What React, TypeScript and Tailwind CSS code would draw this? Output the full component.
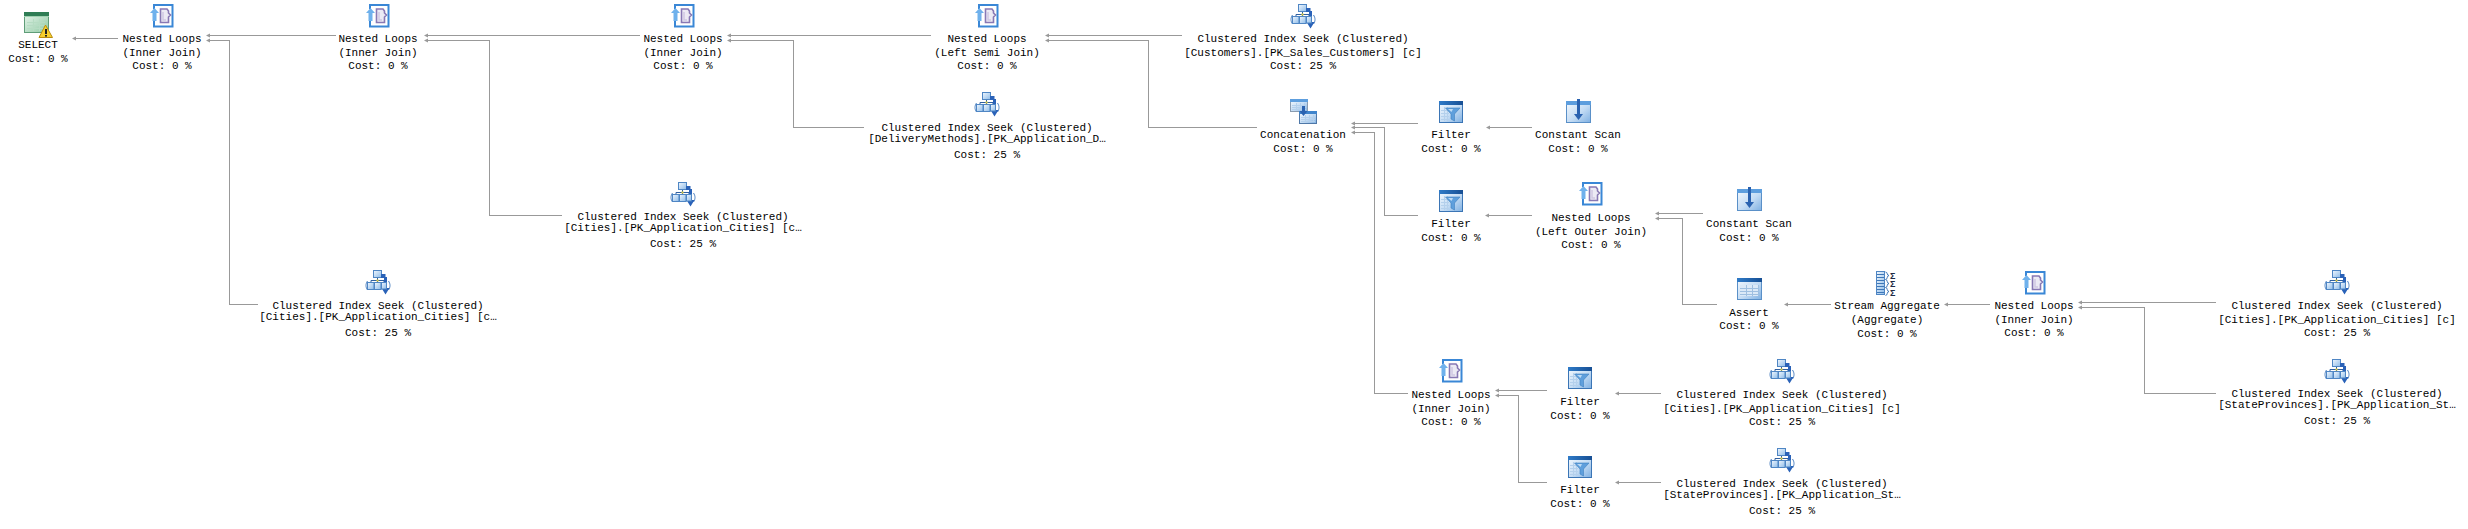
import React from "react";

type IconName = "select" | "loops" | "seek" | "filter" | "scan" | "assert" | "concat" | "agg";

type NodeData = { cx: number; top: number; icon: IconName; iconX?: number; lines: [string, number][] };

const Defs = () => (
  <svg width="0" height="0" className="absolute">
    <defs>
      <linearGradient id="winBody" x1="0" y1="0" x2="1" y2="1">
        <stop offset="0" stopColor="#f4f9fe" />
        <stop offset="0.55" stopColor="#c4dcf4" />
        <stop offset="1" stopColor="#7fb0e2" />
      </linearGradient>
      <linearGradient id="winHead" x1="0" y1="0" x2="1" y2="0">
        <stop offset="0" stopColor="#2f7bc8" />
        <stop offset="1" stopColor="#174f94" />
      </linearGradient>
      <linearGradient id="greenBody" x1="0" y1="0" x2="1" y2="1">
        <stop offset="0" stopColor="#e8f5ec" />
        <stop offset="1" stopColor="#8fcaa4" />
      </linearGradient>
      <linearGradient id="boxFill" x1="0" y1="0" x2="1" y2="1">
        <stop offset="0" stopColor="#f0f7fe" />
        <stop offset="1" stopColor="#8dbbe8" />
      </linearGradient>
    </defs>
  </svg>
);

const Grid = ({ x, y, w, h, stroke = "#a9c8e8", dx = 4, dy = 3 }: { x: number; y: number; w: number; h: number; stroke?: string; dx?: number; dy?: number }) => {
  const v: number[] = [];
  const hz: number[] = [];
  for (let i = x + dx; i < x + w; i += dx) v.push(i);
  for (let i = y + dy; i < y + h; i += dy) hz.push(i);
  return (
    <g stroke={stroke} strokeWidth="1" shapeRendering="crispEdges">
      {v.map((a) => (
        <line key={a} x1={a + 0.5} x2={a + 0.5} y1={y} y2={y + h} />
      ))}
      {hz.map((a) => (
        <line key={a} x1={x} x2={x + w} y1={a + 0.5} y2={a + 0.5} />
      ))}
    </g>
  );
};

const SelectIcon = () => (
  <svg width="29" height="26" viewBox="0 0 29 26" className="block">
    <rect x="0.5" y="0.5" width="24" height="20" fill="url(#greenBody)" stroke="#5f9d78" />
    <rect x="0" y="0" width="25" height="4" fill="#2f7d55" />
    <rect x="0" y="4" width="25" height="1" fill="#9fd0b0" />
    <Grid x={3} y={7} w={18} h={12} stroke="#b6dcc3" dx={6} dy={3} />
    <path d="M21.5 13 L28.5 25.5 L15 25.5 Z" fill="#f6cf2e" stroke="#b98d10" strokeWidth="1" strokeLinejoin="round" />
    <rect x="21" y="17" width="2" height="5" fill="#222" />
    <rect x="21" y="23" width="2" height="1.6" fill="#222" />
  </svg>
);

const LoopsIcon = () => (
  <svg width="24" height="24" viewBox="0 0 24 24" className="block">
    <path d="M4 5 V1 H22.5 V22.5 H4 V17" fill="#fff" stroke="#3a87d6" strokeWidth="2" />
    <path d="M0 9 L4.5 4 L9 9 H6.5 V17 H2.5 V9 Z" fill="#6fb1ec" />
    <path d="M10.5 5 H17 L18.5 7 V9 L20.5 11 L18.5 13 V18.5 H10.5 Z" fill="#eceaf4" stroke="#8878b4" strokeWidth="1.6" />
    <path d="M13 8 V16 H16" fill="none" stroke="#cfc8e2" strokeWidth="1.5" />
  </svg>
);

const SeekIcon = () => (
  <svg width="26" height="25" viewBox="0 0 26 25" className="block">
    <path d="M2.5 11 C0.5 14 0.5 17 2.5 20" fill="none" stroke="#4a7fc0" strokeWidth="1" />
    <path d="M23.5 11 C25.5 14 25.5 17 23.5 20" fill="none" stroke="#4a7fc0" strokeWidth="1" />
    <path d="M12.5 7 V10 M6 13 V10.5 H19 V13 M12.5 10 V13" fill="none" stroke="#2f5f9f" strokeWidth="1" />
    <rect x="8.5" y="0.5" width="8" height="7" fill="url(#boxFill)" stroke="#4f86c4" />
    <rect x="2.5" y="12.5" width="6.5" height="7" fill="url(#boxFill)" stroke="#4f86c4" />
    <rect x="9.5" y="12.5" width="6.5" height="7" fill="url(#boxFill)" stroke="#4f86c4" />
    <path d="M16 4 H20.5 V7 H22 V18 H24.5 L20.5 24.5 L16.5 18 H19 V8 H16 Z" fill="#2a62b8" />
    <rect x="16.5" y="12.5" width="5" height="6.5" fill="url(#boxFill)" stroke="#4f86c4" />
    <rect x="11.5" y="9.5" width="2" height="2" fill="#e0d040" />
  </svg>
);

const FilterIcon = () => (
  <svg width="24" height="22" viewBox="0 0 24 22" className="block">
    <rect x="0.5" y="0.5" width="23" height="21" fill="url(#winBody)" stroke="#3b75b5" />
    <rect x="0" y="0" width="24" height="4" fill="url(#winHead)" />
    <Grid x={2} y={6} w={8} h={14} dx={3} dy={3} stroke="#b4d0ec" />
    <path d="M6.5 7 H21 L15.5 13 V20 L12 18 V13 Z" fill="#5f9fdc" stroke="#3e7fc0" strokeWidth="0.6" />
    <path d="M9 8 H14 L12.5 11 Z" fill="#bcdaf5" />
  </svg>
);

const ScanIcon = () => (
  <svg width="25" height="24" viewBox="0 0 25 24" className="block">
    <rect x="0.5" y="2.5" width="24" height="21" fill="url(#winBody)" stroke="#5a90c8" />
    <rect x="0" y="2" width="25" height="4" fill="#5d9ede" />
    <rect x="11" y="0" width="3" height="17" fill="#2a62b0" />
    <path d="M8 15 H17 L12.5 21 Z" fill="#2a62b0" />
  </svg>
);

const AssertIcon = () => (
  <svg width="25" height="22" viewBox="0 0 25 22" className="block">
    <rect x="0.5" y="0.5" width="24" height="21" fill="url(#winBody)" stroke="#5a90c8" />
    <rect x="0" y="0" width="25" height="4" fill="url(#winHead)" />
    <rect x="3" y="7" width="19" height="11" fill="#dbe9f7" />
    <Grid x={3} y={7} w={19} h={11} dx={6} dy={3} stroke="#9fbfe0" />
  </svg>
);

const ConcatIcon = () => (
  <svg width="27" height="25" viewBox="0 0 27 25" className="block">
    <rect x="0.5" y="0.5" width="17" height="12" fill="url(#winBody)" stroke="#8a9cb0" />
    <rect x="0" y="0" width="18" height="3" fill="#5d9ede" />
    <Grid x={2} y={4} w={14} h={7} dx={4} dy={2} stroke="#b4d0ec" />
    <rect x="9.5" y="12.5" width="17" height="12" fill="url(#winBody)" stroke="#4f78a8" />
    <rect x="9" y="12" width="18" height="3" fill="#3f84cc" />
    <Grid x={11} y={16} w={14} h={7} dx={4} dy={2} stroke="#b4d0ec" />
    <path d="M12 7 H15 V12 H17.5 L13.5 17 L9.5 12 H12 Z" fill="#2a62b0" />
  </svg>
);

const AggIcon = () => (
  <svg width="22" height="25" viewBox="0 0 22 25" className="block">
    <rect x="0.5" y="0.5" width="8" height="23" fill="url(#boxFill)" stroke="#4f86c4" />
    <path d="M1 3.5 H8 M1 6.5 H8 M1 9.5 H8 M1 12.5 H8 M1 15.5 H8 M1 18.5 H8 M1 21.5 H8" stroke="#3f78b8" strokeWidth="1" />
    <g fill="none" stroke="#3f78b8" strokeWidth="1">
      <path d="M9.5 1 C12 1 10.5 4.5 13 4.5 C10.5 4.5 12 8.5 9.5 8.5" />
      <path d="M9.5 8.5 C12 8.5 10.5 12.5 13 12.5 C10.5 12.5 12 16.5 9.5 16.5" />
      <path d="M9.5 16.5 C12 16.5 10.5 20.5 13 20.5 C10.5 20.5 12 24.5 9.5 24.5" />
    </g>
    <g fill="#1f2a44" fontSize="9" fontWeight="700" fontFamily="'Liberation Sans', sans-serif">
      <text x="14" y="8">Σ</text>
      <text x="14" y="16">Σ</text>
      <text x="14" y="24.5">Σ</text>
    </g>
  </svg>
);

const icons: Record<IconName, { el: React.ReactNode; h: number }> = {
  select: { el: <SelectIcon />, h: 26 },
  loops: { el: <LoopsIcon />, h: 24 },
  seek: { el: <SeekIcon />, h: 25 },
  filter: { el: <FilterIcon />, h: 22 },
  scan: { el: <ScanIcon />, h: 24 },
  assert: { el: <AssertIcon />, h: 22 },
  concat: { el: <ConcatIcon />, h: 25 },
  agg: { el: <AggIcon />, h: 25 },
};

const loops = (cx: number, top: number, y: number, sub: string): NodeData => ({
  cx,
  top,
  icon: "loops",
  lines: [["Nested Loops", y], [sub, y + 14], ["Cost: 0 %", y + 27]],
});
const seek = (cx: number, top: number, y: number, sub: string, cut = false): NodeData => ({
  cx,
  top,
  icon: "seek",
  lines: cut
    ? [["Clustered Index Seek (Clustered)", y], [sub, y + 11], ["Cost: 25 %", y + 27]]
    : [["Clustered Index Seek (Clustered)", y], [sub, y + 14], ["Cost: 25 %", y + 27]],
});
const filter = (cx: number, top: number, y: number): NodeData => ({
  cx,
  top,
  icon: "filter",
  lines: [["Filter", y], ["Cost: 0 %", y + 14]],
});
const scan = (cx: number, top: number, y: number): NodeData => ({
  cx,
  top,
  icon: "scan",
  lines: [["Constant Scan", y], ["Cost: 0 %", y + 14]],
});

const nodes: NodeData[] = [
  { cx: 38, top: 12, icon: "select", iconX: 1, lines: [["SELECT", 45], ["Cost: 0 %", 59]] },
  loops(162, 4, 39, "(Inner Join)"),
  loops(378, 4, 39, "(Inner Join)"),
  loops(683, 4, 39, "(Inner Join)"),
  loops(987, 4, 39, "(Left Semi Join)"),
  seek(1303, 4, 39, "[Customers].[PK_Sales_Customers] [c]"),
  seek(987, 92, 128, "[DeliveryMethods].[PK_Application_D…", true),
  seek(683, 182, 217, "[Cities].[PK_Application_Cities] [c…", true),
  seek(378, 270, 306, "[Cities].[PK_Application_Cities] [c…", true),
  { cx: 1303, top: 99, icon: "concat", lines: [["Concatenation", 135], ["Cost: 0 %", 149]] },
  filter(1451, 101, 135),
  scan(1578, 99, 135),
  filter(1451, 190, 224),
  loops(1591, 182, 218, "(Left Outer Join)"),
  scan(1749, 187, 224),
  { cx: 1749, top: 278, icon: "assert", lines: [["Assert", 313], ["Cost: 0 %", 326]] },
  {
    cx: 1887,
    top: 271,
    icon: "agg",
    lines: [["Stream Aggregate", 306], ["(Aggregate)", 320], ["Cost: 0 %", 334]],
  },
  loops(2034, 271, 306, "(Inner Join)"),
  seek(2337, 270, 306, "[Cities].[PK_Application_Cities] [c]"),
  seek(2337, 359, 394, "[StateProvinces].[PK_Application_St…", true),
  loops(1451, 359, 395, "(Inner Join)"),
  filter(1580, 367, 402),
  filter(1580, 456, 490),
  seek(1782, 359, 395, "[Cities].[PK_Application_Cities] [c]"),
  seek(1782, 448, 484, "[StateProvinces].[PK_Application_St…", true),
];

const edges: [number, number][][] = [
  [[73, 38], [117, 38]],
  [[207, 35], [335, 35]],
  [[207, 40], [229, 40], [229, 304], [257, 304]],
  [[425, 35], [639, 35]],
  [[425, 40], [489, 40], [489, 215], [561, 215]],
  [[728, 35], [930, 35]],
  [[728, 40], [793, 40], [793, 127], [863, 127]],
  [[1046, 35], [1181, 35]],
  [[1046, 40], [1148, 40], [1148, 127], [1256, 127]],
  [[1352, 123], [1417, 123]],
  [[1352, 127], [1384, 127], [1384, 215], [1417, 215]],
  [[1352, 132], [1374, 132], [1374, 393], [1407, 393]],
  [[1487, 127], [1531, 127]],
  [[1486, 215], [1531, 215]],
  [[1656, 213], [1702, 213]],
  [[1656, 218], [1682, 218], [1682, 304], [1716, 304]],
  [[1785, 304], [1830, 304]],
  [[1945, 304], [1989, 304]],
  [[2079, 302], [2215, 302]],
  [[2079, 307], [2144, 307], [2144, 393], [2215, 393]],
  [[1496, 390], [1546, 390]],
  [[1496, 395], [1518, 395], [1518, 482], [1546, 482]],
  [[1616, 393], [1660, 393]],
  [[1616, 482], [1660, 482]],
];

const LINE = 14;

const PlanNode = ({ n }: { n: NodeData }) => {
  const ic = icons[n.icon];
  let prev = n.top + ic.h;
  return (
    <div className="absolute flex w-[280px] flex-col items-center" style={{ left: n.cx - 140, top: n.top }}>
      <div style={{ marginLeft: n.iconX ?? 0 }}>{ic.el}</div>
      {n.lines.map(([text, y], i) => {
        const mt = y - LINE / 2 - prev;
        prev = y + LINE / 2;
        return (
          <div key={i} className="h-[14px] whitespace-pre leading-[14px]" style={{ marginTop: mt }}>
            {text}
          </div>
        );
      })}
    </div>
  );
};

export default function App() {
  return (
    <div className="relative h-[529px] w-[2468px] overflow-hidden bg-white font-['Liberation_Mono',monospace] text-[11px] text-black">
      <Defs />
      <svg width="2468" height="529" className="absolute left-0 top-0">
        {edges.map((pts, i) => (
          <g key={i}>
            <polyline
              points={pts.map(([x, y]) => `${x + 0.5},${y + 0.5}`).join(" ")}
              fill="none"
              stroke="#999999"
              strokeWidth="1"
              shapeRendering="crispEdges"
            />
            <path
              d={`M${pts[0][0] - 1} ${pts[0][1] + 0.5} L${pts[0][0] + 3} ${pts[0][1] - 1.5} V${pts[0][1] + 2.5} Z`}
              fill="#999999"
            />
          </g>
        ))}
      </svg>
      {nodes.map((n, i) => (
        <PlanNode key={i} n={n} />
      ))}
    </div>
  );
}
